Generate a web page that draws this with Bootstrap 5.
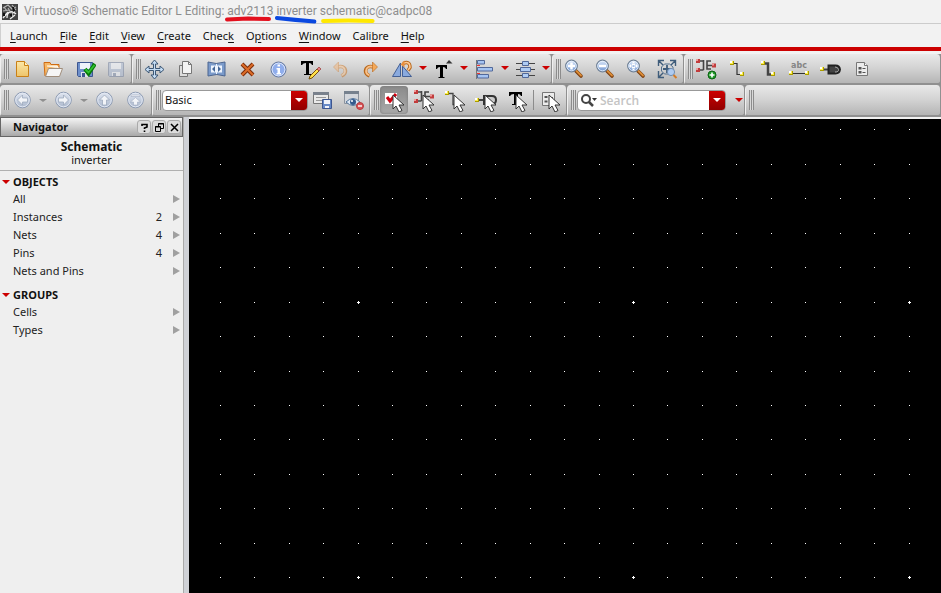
<!DOCTYPE html>
<html lang="en">
<head>
<meta charset="utf-8">
<meta name="viewport" content="width=device-width, initial-scale=1">
<title>Virtuoso Schematic Editor</title>
<link href="https://cdn.jsdelivr.net/npm/bootstrap@5.3.0/dist/css/bootstrap.min.css" rel="stylesheet">
<style>
body{font-family:"Noto Sans","Open Sans",sans-serif;font-size:11px;line-height:18px;color:#111;background:#f2f2f2}
button,select,input{font:inherit;color:inherit}
.titlebar{height:24px;padding:0 2px;border-bottom:1px solid #ccc;color:#8e8e8e;white-space:pre}
.titlebar h1{font-family:Roboto,"Noto Sans",sans-serif;font-size:12px;line-height:23px;font-weight:400;margin:0 0 0 6px}
.marked{position:relative}
.marked svg{position:absolute;left:-2px;top:8px;width:calc(100% + 2px);height:9px;overflow:visible}
.menus{height:23px;padding-left:9px;gap:12px;border-left:1px solid #d0d0d0}
.menus a{color:#111;text-decoration:none;line-height:24px}
.menus u{text-underline-offset:2px}
.redline{height:4px;background:#c00}
.bars{padding-top:3px;background:#f2f2f2}
.bar-row{height:31px;background:#8f8f8f}
.bar-row+.bar-row{height:32px}
.grp{background:linear-gradient(#e9e9e9,#d2d2d2 50%,#b5b5b5);border-bottom:2px solid #909090;border-right:1px solid #909090;border-left:1px solid #efefef;border-radius:4px;padding:0 4px 0 3px}
.grip{width:5px;height:20px;margin-right:1px;background:repeating-linear-gradient(90deg,#8c8c8c 0 1px,#d8d8d8 1px 2px);flex:none}
.tool{width:24px;height:26px;padding:0;border:0;background:none;flex:none;display:flex;align-items:center;justify-content:center}
.tool svg{width:24px;height:24px;display:block}
.gap-tool{gap:7px}
.drop{width:17px;height:24px;padding:0 0 0 5px;border:0;background:none;flex:none;display:flex;align-items:center}
.drop:last-child{width:14px}
.drop::before,.tri{content:"";border:4px solid transparent;border-top-color:#c00;border-bottom:0;width:8px}
.drop.grey::before{border-top-color:#8f8f8f;border-width:3px 4px 0}
.pressed{width:28px;height:28px;border-radius:4px;background:linear-gradient(#8a8a8a,#aaa);box-shadow:inset 0 0 3px #777}
.field{height:21px;background:#fff;border-radius:4px;border:1px solid #999;overflow:hidden}
.field select,.field input{appearance:none;border:0;background:none;outline:0;padding:0 0 0 2px;min-width:0;flex:1;height:19px}
.field input::placeholder{color:#c4c4c4;opacity:1;font-family:"Open Sans",sans-serif;font-weight:600;font-size:12px}
.redbtn{width:16px;height:21px;padding:0;border:0;background:linear-gradient(#d00000,#8e0000);display:flex;align-items:center;justify-content:center;flex:none}
.redbtn::before{content:"";border:4px solid transparent;border-top-color:#fff;border-bottom:0}
.combo{width:146px}.search{width:149px}
.after-combo{padding-left:2px}
.rule{width:1px;height:20px;background:#8c8c8c}
.navpane{width:184px;background:#efefef;border-right:1px solid #aaa;flex:none}
.panehead{height:20px;border:1px solid #666;background:linear-gradient(#f4f4f4,#a8a8a8);padding-left:12px}
.panehead h2,.sect{font-size:11px;font-weight:700;margin:0}
.mini{width:14px;height:14px;margin-right:1px;padding:0;border:1px solid #aaa;border-radius:3px;background:#dcdcdc;display:flex;align-items:center;justify-content:center}
.mini svg{width:9px;height:9px}
.crumb{height:34px;border-bottom:1px solid #b0b0b0;text-align:center;line-height:13px;padding-top:3px}
.crumb strong{font-size:12px;display:block;line-height:13px}
.sect{border:0;background:none;padding:0 0 0 2px;height:17px;margin-top:2px;display:flex;align-items:center;gap:3px}
.tree+.sect{margin-top:6px}
.tree{list-style:none;padding:0;margin:0}
.tree a{display:flex;height:18px;padding:0 3px 0 13px;color:#222;text-decoration:none;align-items:center}
.tree a::after{content:"";border:4px solid transparent;border-left:7px solid #a0a0a0;border-right:0;margin-left:11px}
.tree span:first-child{flex:1}
.split{width:5px;background:#cfd1d6;flex:none}
.stage{background:#000;margin-top:2px;flex:1;min-width:0;overflow:hidden}
.stage svg{display:block;width:100%;height:100%}
</style>
</head>
<body class="vh-100 d-flex flex-column overflow-hidden">
<svg width="0" height="0" class="position-absolute" aria-hidden="true"><defs>
<linearGradient id="gb" x2="0" y2="1"><stop stop-color="#dce8fa"/><stop offset="1" stop-color="#6d94cf"/></linearGradient>
<linearGradient id="gy" x2="0" y2="1"><stop stop-color="#fbe7a8"/><stop offset="1" stop-color="#eec469"/></linearGradient>
<linearGradient id="gg" x2="0" y2="1"><stop stop-color="#dfe5f0"/><stop offset="1" stop-color="#aab7cc"/></linearGradient>
<symbol id="cur" viewBox="0 0 24 24"><path d="M11 7v14l3-3 3 6 3-1.500-3-5.500h5z" fill="#fff" stroke="#333"/></symbol>
<symbol id="lens" viewBox="0 0 24 24"><path d="M14 14l5 5" stroke="#7c3f10" stroke-width="3.600" stroke-linecap="round"/><path d="M14.500 14l4.500 4.500" stroke="#dc8c36" stroke-width="1.800" stroke-linecap="round"/><circle cx="9.500" cy="9" r="5.800" fill="url(#gb)" stroke="#6d7f94" stroke-width="1.200"/><circle cx="9.500" cy="9" r="4.800" fill="none" stroke="#eef5ff" stroke-width=".8"/></symbol>
<symbol id="orb" viewBox="0 0 24 24"><circle cx="12.500" cy="12" r="7.800" fill="url(#gg)" stroke="#8c9ab2"/><circle cx="12.500" cy="12" r="6.800" fill="none" stroke="#e2e8f3"/></symbol>
<symbol id="pin" viewBox="0 0 4 4"><path fill="#a99b00" d="M0 0h4v4H0z"/><path fill="#fff04d" d="M0 0h3v3H0z"/><path fill="#fff" d="M0 0h2v2H0z"/></symbol>
<symbol id="gate" viewBox="0 0 24 24"><path d="M5 4h4.500M9.500 3v10M5 13h4.500M17 4h-4v8h4M13 8.500h6" stroke="#444" stroke-width="1.600" fill="none"/><path fill="#c23c3c" d="M2 2h4v4H2zM2 11h4v4H2zM18 6.500h4v4h-4z"/><path fill="#ef9a9a" d="M2 2h2v2H2zM2 11h2v2H2zM18 6.500h2v2h-2z"/></symbol>
</defs></svg>

<header class="titlebar d-flex align-items-center">
<svg width="16" height="16" viewBox="0 0 16 16" aria-hidden="true"><path fill="#444" d="M0 0h16v16H0z"/><path d="M1 4l5-3 4 4 4-2M2 3l3 4M10 1l4 5M6 4l5 8M1 7l6-1M13 7l-4 4M3 12l4-4" stroke="#b5b5b5" stroke-width="1.200" fill="none"/><path d="M5 14q0-5 3-6t6 2M1 14l5-6M8 15l5-4" stroke="#eee" stroke-width="1.300" fill="none"/><path fill="#111" d="M10 3l2 0 1 4-2 1zM7 11l3-2v4zM1 9h2v3H1z"/></svg>
<h1>Virtuoso® Schematic Editor L Editing: <span class="marked">adv2113<svg viewBox="0 0 46 9" preserveAspectRatio="none"><path d="M2 7.500l20-1 20 .500" stroke="#e3101e" stroke-width="4" stroke-linecap="round" fill="none"/></svg></span> <span class="marked">inverter<svg viewBox="0 0 46 9" preserveAspectRatio="none"><path d="M3 6q20 2 41 3.500" stroke="#0a48e0" stroke-width="4" stroke-linecap="round" fill="none"/></svg></span> <span class="marked">schematic<svg viewBox="0 0 56 9" preserveAspectRatio="none"><path d="M5 9q25-1 48 0" stroke="#ffe800" stroke-width="4" stroke-linecap="round" fill="none"/></svg></span>@cadpc08</h1>
</header>
<nav class="menus d-flex"><a href="#"><u>L</u>aunch</a><a href="#"><u>F</u>ile</a><a href="#"><u>E</u>dit</a><a href="#"><u>V</u>iew</a><a href="#"><u>C</u>reate</a><a href="#">Chec<u>k</u></a><a href="#">O<u>p</u>tions</a><a href="#"><u>W</u>indow</a><a href="#">Cali<u>b</u>re</a><a href="#"><u>H</u>elp</a></nav>
<div class="redline"></div>

<div class="bars">
<div class="bar-row d-flex">
 <div class="grp d-flex align-items-center"><i class="grip"></i><div class="d-flex gap-tool">
  <button class="tool" aria-label="New"><svg viewBox="0 0 24 24"><path d="M6.500 4.500h8l4 4v11h-12z" fill="url(#gy)" stroke="#c98016"/><path d="M14.500 4.500v4h4" fill="#fff3c8" stroke="#c98016"/></svg></button>
  <button class="tool" aria-label="Open"><svg viewBox="0 0 24 24"><path d="M4 19L3 5.500h6l1 2h8v5" fill="#f6b765" stroke="#cf6b12"/><path d="M6 9h10l2 3" stroke="#fff" fill="#f5e3c8"/><path d="M7.500 11.500h14l-3 8h-14z" fill="#f6f6f6" stroke="#a08e7c"/></svg></button>
  <button class="tool" aria-label="Check and save"><svg viewBox="0 0 24 24"><path d="M5.500 5.500h15v14h-14l-1-1z" fill="#6d8fca" stroke="#3d5690"/><path d="M8 6h10v6H8z" fill="#eef2fa"/><path d="M9 15h8v5H9z" fill="#dfe3ea"/><path d="M10 16h3v4h-3z" fill="#3d5690"/><path d="M13 12l3.500 4.500L23 7" fill="none" stroke="#087c08" stroke-width="4"/><path d="M13.500 12.500l3 3L22.500 8" fill="none" stroke="#32c232" stroke-width="1.800"/></svg></button>
  <button class="tool" aria-label="Save" disabled><svg viewBox="0 0 24 24" opacity=".6"><path d="M5.500 5.500h15v14h-14l-1-1z" fill="#aebbd2" stroke="#7f8ba4"/><path d="M8 6h10v6H8zM9 15h8v4H9z" fill="#eceff5"/><path d="M10 16h3v3h-3z" fill="#8795af"/></svg></button>
 </div></div>
 <div class="grp pe-0 d-flex align-items-center"><i class="grip"></i><div class="d-flex gap-tool">
  <button class="tool" aria-label="Move"><svg viewBox="0 0 24 24"><path d="M12.500 3l3.500 4h-2.500v4.500H18V9l4 3.500-4 3.500v-2.500h-4.500V18H16l-3.500 4L9 18h2.500v-4.500H7V16l-4-3.500L7 9v2.500h4.500V7H9z" fill="#c4dcf4" stroke="#3c5774"/></svg></button>
  <button class="tool" aria-label="Copy"><svg viewBox="0 0 24 24"><path d="M6.500 8.500h8v11h-8z" fill="#dedede" stroke="#777"/><path d="M9.500 4.500h6l3 3v9h-9z" fill="#f4f4f4" stroke="#777"/><path d="M15.500 4.500v3h3" fill="none" stroke="#777"/></svg></button>
  <button class="tool" aria-label="Stretch"><svg viewBox="0 0 24 24"><path d="M4 5q8 3 17 0v14q-8-3-17 0z" fill="#7b9bcb" stroke="#4a6490"/><path d="M7 8.500h11v7H7z" fill="#eef4fd"/><path d="M8 12l3-3v6zM17 12l-3-3v6z" fill="#456798"/><path d="M12.500 7v10" stroke="#eef4fd"/></svg></button>
  <button class="tool" aria-label="Delete"><svg viewBox="0 0 24 24"><path d="M7 7l11 11M18 7L7 18" stroke="#7c2c0a" stroke-width="4"/><path d="M7 7l11 11M18 7L7 18" stroke="#dc6c28" stroke-width="2"/></svg></button>
  <button class="tool" aria-label="Properties"><svg viewBox="0 0 24 24"><circle cx="12.500" cy="12.500" r="7.500" fill="#8fadec" stroke="#64779c"/><circle cx="12.500" cy="12.500" r="6.400" fill="none" stroke="#dce6fb"/><path d="M11.500 7.500h2.500v2h-2.500zM10.500 11h3.500v5h1v1.500h-4.500V16h1v-3.500h-1z" fill="#fff"/></svg></button>
  <button class="tool" aria-label="Edit label"><svg viewBox="0 0 24 24"><path d="M4 4h12v4h-1q-.5-2-3-2v11h2v1H7v-1h2V6Q6 6 5 8H4z"/><path d="M13 19l-1 3 3-1 7-7-2-2z" fill="#ffe04a" stroke="#78500c"/><path d="M20 12l2-2 2 2-2 2z" fill="#e88080" stroke="#963b3b" stroke-width=".7"/></svg></button>
  <button class="tool" aria-label="Undo" disabled><svg viewBox="0 0 24 24" opacity=".5"><path d="M9 10q8-2 8.500 4 0 3-4 5" stroke="#c8701c" stroke-width="3.500" fill="none"/><path d="M9 10q7.500-2 8 4 0 3-3.500 4.500" stroke="#f9c694" stroke-width="1.800" fill="none"/><path d="M5.500 10l5-5v10z" fill="#f4b478" stroke="#c8701c" stroke-width=".6"/></svg></button>
  <button class="tool" aria-label="Redo"><svg viewBox="0 0 24 24"><path d="M15 10q-8-2-8.500 4 0 3 4 5" stroke="#b8681c" stroke-width="3.500" fill="none"/><path d="M15 10q-7.500-2-8 4 0 3 3.500 4.500" stroke="#f9c088" stroke-width="1.800" fill="none"/><path d="M18.500 10l-5-5v10z" fill="#f4a858" stroke="#b8681c" stroke-width=".6"/></svg></button>
  <div class="d-flex"><button class="tool" aria-label="Rotate"><svg viewBox="0 0 24 24"><path d="M2.500 19.500L10.500 6v13.500zM12.500 9v10.500h9z" fill="#8aaade" stroke="#435f94"/><path d="M13 6.500q7-3 7 4l-2 3" stroke="#b8681c" stroke-width="3.500" fill="none"/><path d="M13 6.500q7-3 7 4l-2 2.500" stroke="#ffc890" stroke-width="1.500" fill="none"/><path d="M10.500 7.500l4-4v7z" fill="#e98f3c"/></svg></button><button class="drop" aria-label="Rotate options"></button>
  <button class="tool" aria-label="Text size"><svg viewBox="0 0 24 24"><path d="M5 8h11v4h-1q-.5-2-3-2v10h1.500v1h-6v-1H9V10q-2.500 0-3 2H5z"/><path d="M15 6.500l3-3.500 3.500 3.500z" fill="#333"/></svg></button><button class="drop" aria-label="Text options"></button>
  <button class="tool" aria-label="Align left"><svg viewBox="0 0 24 24"><path d="M4.500 3v19" stroke="#777"/><path d="M5 8.500h3M5 16.500h3" stroke="#e33"/><path d="M5.500 3.500h7v3.500h-7zM5.500 10.500h15v3.500h-15zM5.500 17.500h11v3.500h-11z" fill="#a5c4f2" stroke="#52699a"/></svg></button><button class="drop" aria-label="Align options"></button>
  <button class="tool" aria-label="Distribute"><svg viewBox="0 0 24 24"><path d="M3 6.500h19M3 12.500h19M3 18.500h19" stroke="#444"/><path d="M9.500 4.500h6v4h-6zM7.500 10.500h10v4h-10zM9.500 16.500h6v4h-6z" fill="#b0cdf4" stroke="#52699a"/></svg></button><button class="drop" aria-label="Distribute options"></button></div>
 </div></div>
 <div class="grp d-flex align-items-center"><i class="grip"></i><div class="d-flex gap-tool">
  <button class="tool" aria-label="Zoom in"><svg viewBox="0 0 24 24"><use href="#lens"/><path d="M9.500 5.500v7M6 9h7" stroke="#fff" stroke-width="2.500"/></svg></button>
  <button class="tool" aria-label="Zoom out"><svg viewBox="0 0 24 24"><use href="#lens"/><path d="M6 9h7" stroke="#fff" stroke-width="2.500"/></svg></button>
  <button class="tool" aria-label="Zoom fit"><svg viewBox="0 0 24 24"><use href="#lens"/><path d="M9.500 4.500l2 2h-4zM9.500 13.500l2-2h-4zM5 9l2-2v4zM14 9l-2-2v4z" fill="#fff"/><path d="M8 7.500h3v3H8z" fill="none" stroke="#fff"/></svg></button>
  <button class="tool" aria-label="Zoom selected"><svg viewBox="0 0 24 24"><path d="M3.500 9V3.500H9M15 3.500h5.500V9M3.500 14v6.500H9M4 4l4 4M20 4l-4 4M4 20l4-4" stroke="#3f5c7a" stroke-width="1.400" fill="none"/><path d="M9.500 7h5l3.500 3v4L15 17H9.500L6.500 14v-4z" fill="none" stroke="#52708f"/><path d="M12 8v8M8 12h8" stroke="#3f5c7a" stroke-width="1.800"/><circle cx="16" cy="15" r="3.600" fill="#aecbf1" stroke="#718eb2"/><path d="M18.500 18l3 3" stroke="#d47b26" stroke-width="2"/></svg></button>
 </div></div>
 <div class="grp d-flex align-items-center flex-grow-1"><i class="grip"></i><div class="d-flex gap-tool">
  <button class="tool" aria-label="Create instance"><svg viewBox="0 0 24 24"><use href="#gate"/><circle cx="18" cy="18" r="4" fill="#1f9a28" stroke="#0b6312"/><path d="M18 15.500v5M15.500 18h5" stroke="#fff" stroke-width="1.600"/></svg></button>
  <button class="tool" aria-label="Create wire"><svg viewBox="0 0 24 24"><path d="M7 6.500h5v11h5" fill="none" stroke="#333" stroke-width="1.200"/><use href="#pin" x="5" y="4" width="4" height="4"/><use href="#pin" x="15" y="15" width="4" height="4"/></svg></button>
  <button class="tool" aria-label="Create wide wire"><svg viewBox="0 0 24 24"><path d="M7 6.500h5v11h5" fill="none" stroke="#444" stroke-width="2.500"/><use href="#pin" x="5" y="4" width="4" height="4"/><use href="#pin" x="15" y="15" width="4" height="4"/></svg></button>
  <button class="tool" aria-label="Create wire name"><svg viewBox="0 0 24 24"><text x="4" y="11" font-family="DejaVu Sans" font-size="8" font-weight="bold" fill="#858585">abc</text><path d="M4 16.500h17" stroke="#333"/><use href="#pin" x="2" y="14" width="4" height="4"/><use href="#pin" x="18" y="14" width="4" height="4"/></svg></button>
  <button class="tool" aria-label="Create pin"><svg viewBox="0 0 24 24"><path d="M4 12.500h6" stroke="#444" stroke-width="2"/><path d="M10.500 8.500h7q4 0 4.500 4-.5 4-4.500 4h-7z" fill="#444" stroke="#222" stroke-width="2"/><path d="M17 10q3 0 3.500 2.500T17 15" stroke="#aaa" fill="none"/><use href="#pin" x="2" y="10" width="4" height="4"/></svg></button>
  <button class="tool" aria-label="Object properties"><svg viewBox="0 0 24 24"><path d="M7.500 5.500h8l3 3v10h-11z" fill="#ececec" stroke="#777"/><path d="M15.500 5.500v3h3" stroke="#777" fill="#fff"/><path d="M9.500 10h3v2.500h-3zM9.500 14h3v2.500h-3z" fill="#555"/><path d="M13.500 11.500h3M13.500 15.500h3" stroke="#555"/></svg></button>
 </div></div>
</div>

<div class="bar-row d-flex">
 <div class="grp d-flex align-items-center"><i class="grip"></i>
  <button class="tool" aria-label="Back" disabled><svg viewBox="0 0 24 24"><use href="#orb"/><path d="M7.500 12l5-5v3h5v4h-5v3z" fill="#f2f4f8" stroke="#96a3b8" stroke-width=".7"/></svg></button><button class="drop grey" aria-label="Back history"></button>
  <button class="tool" aria-label="Forward" disabled><svg viewBox="0 0 24 24"><use href="#orb"/><path d="M17.500 12l-5-5v3h-5v4h5v3z" fill="#f2f4f8" stroke="#96a3b8" stroke-width=".7"/></svg></button><button class="drop grey" aria-label="Forward history"></button>
  <div class="d-flex gap-tool"><button class="tool" aria-label="Up" disabled><svg viewBox="0 0 24 24"><use href="#orb"/><path d="M12.500 7l5 5h-3v5h-4v-5h-3z" fill="#f2f4f8" stroke="#96a3b8" stroke-width=".7"/></svg></button>
  <button class="tool" aria-label="Top" disabled><svg viewBox="0 0 24 24"><use href="#orb"/><path d="M12.500 9.500l5 4.500h-3v3h-4v-3h-3zM8 7h9v1.500H8z" fill="#f2f4f8" stroke="#96a3b8" stroke-width=".5"/></svg></button></div>
 </div>
 <div class="grp d-flex align-items-center"><i class="grip"></i>
  <div class="field combo d-flex align-items-center"><select aria-label="Workspace"><option>Basic</option></select><span class="redbtn"></span></div>
  <div class="d-flex gap-tool after-combo">
  <button class="tool" aria-label="Save workspace"><svg viewBox="0 0 24 24"><path d="M3.500 4.500h15v11h-15z" fill="#e9e9e9" stroke="#777"/><path d="M3 4h16v3H3z" fill="#79818c"/><path d="M6 9.500h10M6 12.500h7" stroke="#999"/><path d="M12.500 11.500h9v9h-9z" fill="#6789c6" stroke="#3d5690"/><path d="M14 12h6v4h-6zM15 18h4v2h-4z" fill="#f0f3fa"/></svg></button>
  <button class="tool" aria-label="Hide toolbars"><svg viewBox="0 0 24 24"><path d="M3.500 3.500h14v12h-14z" fill="#d4d7dc" stroke="#8b939e"/><path d="M3 3h15v3H3z" fill="#76818e"/><path d="M5 14q7-7 14 0-7 7-14 0z" fill="#dce7f4" stroke="#54769b"/><circle cx="12" cy="14" r="3" fill="#33598c"/><circle cx="11" cy="13" r="1" fill="#fff"/><circle cx="19" cy="18" r="3.500" fill="#d75558" stroke="#b83a3d"/><path d="M17 18h4" stroke="#fff" stroke-width="1.400"/></svg></button></div>
 </div>
 <div class="grp d-flex align-items-center"><i class="grip"></i>
  <button class="tool pressed" aria-label="Select all types"><svg viewBox="0 0 24 24"><path d="M3 5h12v11H3z" fill="#fff"/><path d="M5 9l3 4 6-7" stroke="#d00010" stroke-width="3" fill="none"/><use href="#cur"/></svg></button>
  <div class="d-flex gap-tool ps-1">
  <button class="tool" aria-label="Select instances"><svg viewBox="0 0 24 24"><use href="#gate"/><use href="#cur"/></svg></button>
  <button class="tool" aria-label="Select wires"><svg viewBox="0 0 24 24"><path d="M5 5.500h5v11h4" fill="none" stroke="#444" stroke-width="1.300"/><use href="#pin" x="2" y="3" width="4" height="4"/><use href="#pin" x="11" y="14" width="4" height="4"/><use href="#cur"/></svg></button>
  <button class="tool" aria-label="Select pins"><svg viewBox="0 0 24 24"><path d="M3 12h7" stroke="#444" stroke-width="2"/><path d="M10 8h8q4 0 4 4t-4 4h-8z" fill="#ccc" stroke="#333" stroke-width="2"/><use href="#pin" x="1" y="10" width="4" height="4"/><use href="#cur"/></svg></button>
  <button class="tool" aria-label="Select text"><svg viewBox="0 0 24 24"><path d="M4 4h13v4h-1q-.5-2-3-2v10h2v1H7v-1h2V6Q6 6 5 8H4z"/><use href="#cur"/></svg></button>
  </div><span class="rule mx-1"></span>
  <button class="tool" aria-label="Selection properties"><svg viewBox="0 0 24 24"><path d="M4.500 4.500h12v13h-12z" fill="#ececec" stroke="#777"/><path d="M6.500 8h3v2h-3zM6.500 12.500h3v2h-3z" fill="#555"/><path d="M11 9.500h4M11 13.500h4" stroke="#555"/><use href="#cur"/></svg></button>
 </div>
 <div class="grp pe-0 d-flex align-items-center"><i class="grip"></i>
  <div class="field search d-flex align-items-center"><svg width="20" height="18" viewBox="0 0 20 18" aria-hidden="true"><circle cx="8" cy="8" r="4" fill="none" stroke="#444" stroke-width="2"/><path d="M11 11l4 4" stroke="#444" stroke-width="2.500"/><path d="M14 7h5l-2.500 3z" fill="#333"/></svg><input type="search" aria-label="Search" placeholder="Search"><button class="redbtn" aria-label="Search history"></button></div>
  <button class="drop ms-1" aria-label="Search options"></button>
 </div>
 <div class="grp d-flex align-items-center flex-grow-1"><i class="grip"></i></div>
</div>
</div>

<main class="d-flex flex-grow-1">
 <aside class="navpane">
  <div class="panehead d-flex align-items-center"><h2 class="me-auto">Navigator</h2>
   <button class="mini" aria-label="Help"><svg viewBox="0 0 9 9"><path d="M2 3V1.500h5V4L4.500 5v1M4.500 7.500V9" stroke="#000" stroke-width="1.600" fill="none"/></svg></button>
   <button class="mini" aria-label="Float"><svg viewBox="0 0 9 9"><path d="M3.500 3V.500h5v5H6M3 1h6M.500 3.500h5v5h-5zM0 4h6" stroke="#000" fill="none"/></svg></button>
   <button class="mini" aria-label="Close"><svg viewBox="0 0 9 9"><path d="M1 1l7 7M8 1L1 8" stroke="#000" stroke-width="1.500"/></svg></button></div>
  <div class="crumb"><strong>Schematic</strong>inverter</div>
  <button class="sect"><i class="tri"></i>OBJECTS</button>
  <ul class="tree"><li><a href="#"><span>All</span></a></li><li><a href="#"><span>Instances</span><span>2</span></a></li><li><a href="#"><span>Nets</span><span>4</span></a></li><li><a href="#"><span>Pins</span><span>4</span></a></li><li><a href="#"><span>Nets and Pins</span></a></li></ul>
  <button class="sect"><i class="tri"></i>GROUPS</button>
  <ul class="tree"><li><a href="#"><span>Cells</span></a></li><li><a href="#"><span>Types</span></a></li></ul>
 </aside>
 <div class="split"></div>
 <section class="stage" aria-label="Schematic canvas"><svg id="dots" shape-rendering="crispEdges"></svg></section>
</main>
<script>
const dots = document.getElementById('dots'), pitch = 34.43;
let d = '';
for (let r = 0; r < 60; r++) for (let c = 0; c < 100; c++) {
  const x = Math.round(30.9 + c * pitch), y = Math.round(10.49 + r * pitch);
  d += `M${x} ${y}h1v1h-1z`;
  if (c % 8 === 4 && r % 8 === 5) d += `M${x - 1} ${y}h3v1h-3zM${x} ${y - 1}h1v3h-1z`;
}
dots.innerHTML = `<path fill="#fff" d="${d}"/>`;
</script>
<script src="https://cdn.jsdelivr.net/npm/bootstrap@5.3.0/dist/js/bootstrap.bundle.min.js"></script>
</body>
</html>
